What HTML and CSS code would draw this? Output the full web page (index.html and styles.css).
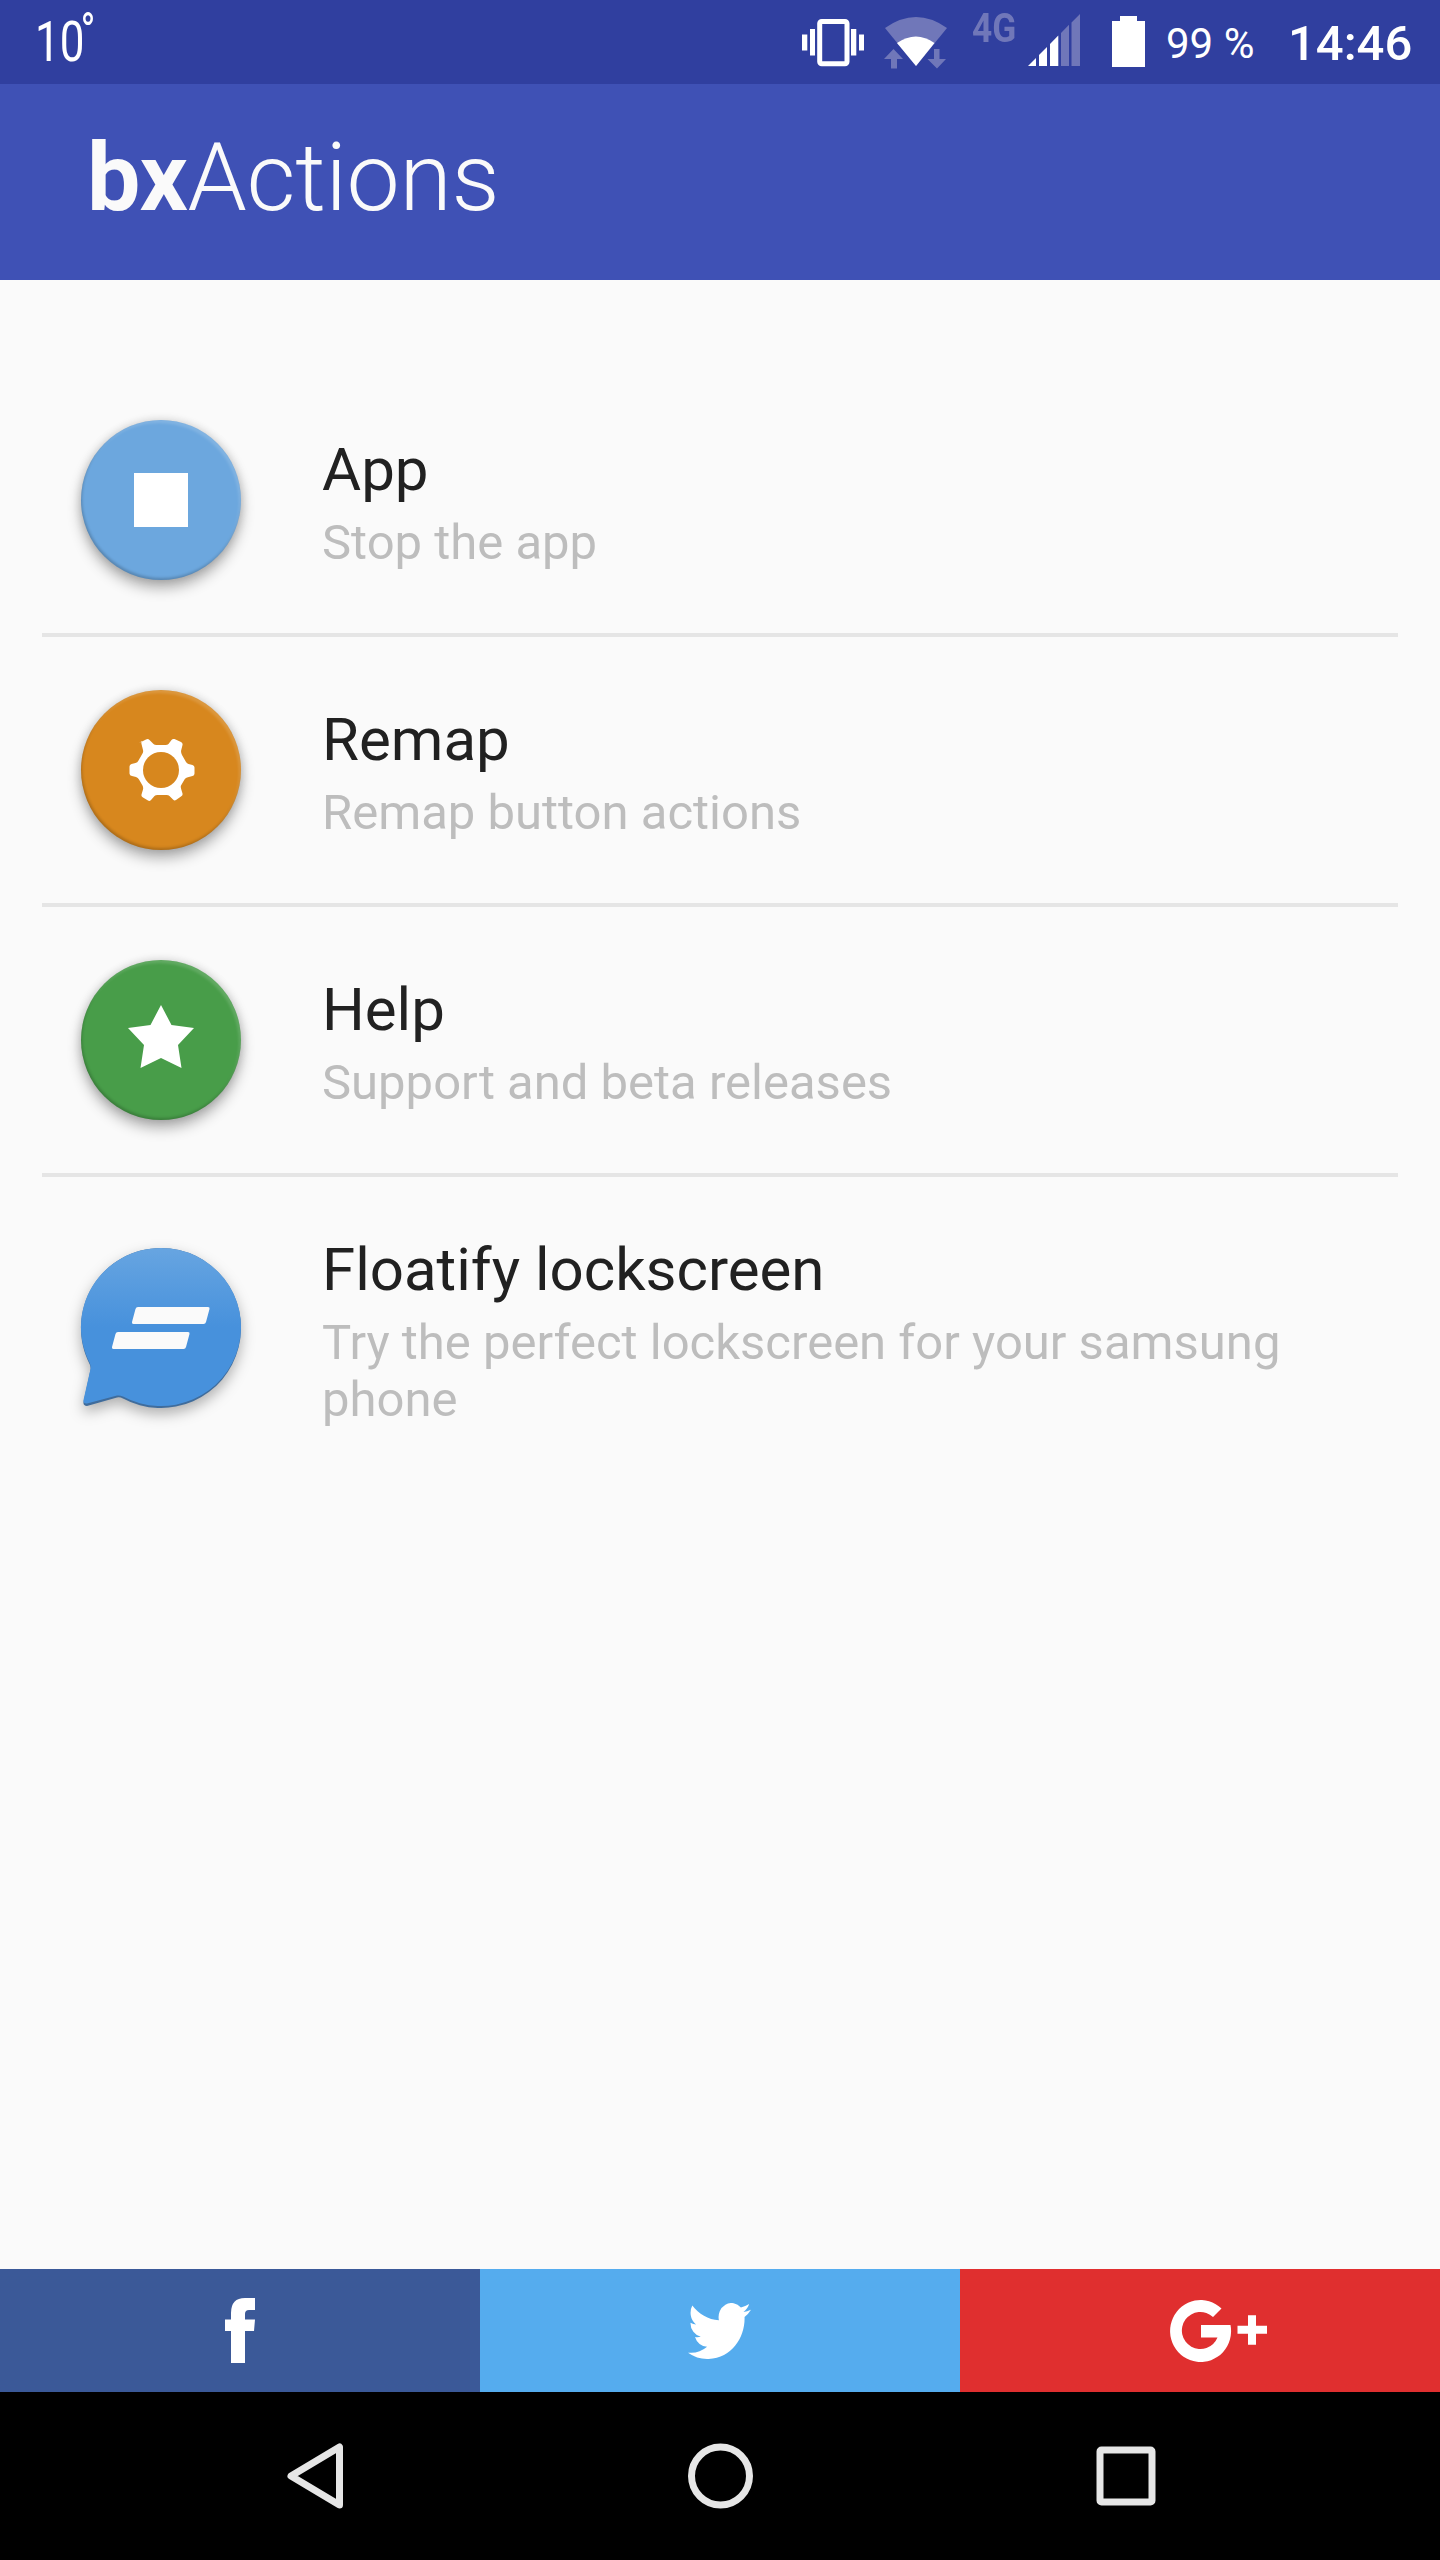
FILE: index.html
```html
<!DOCTYPE html>
<html lang="en">
<head>
    <meta charset="UTF-8">
    <meta name="viewport" content="width=device-width, initial-scale=1.0">
    <title>bxActions</title>
    <link rel="stylesheet" href="styles.css">
</head>
<body>
    <div class="status-bar">
        <div class="temperature"><span class="degrees">10<span class="degree-sign">°</span></span></div>
        <div class="status-icons">
            <svg class="vibrate" width="64" height="84" viewBox="0 0 64 84" fill="#fff">
                <path d="M1 34.5h5.3v16H1zM9 29h5v26.5H9zM50 29h5.3v26.5H50zM58 34.5h5v16h-5z"/>
                <rect x="18.7" y="21.5" width="27.3" height="42.3" rx="2" fill="none" stroke="#fff" stroke-width="5"/>
            </svg>
            <svg class="wifi" width="64" height="84" viewBox="0 0 64 84">
                <path d="M1 28Q32 6 63 28L32 66z" fill="#7077b9"/>
                <path d="M13 43Q32 30 50.5 43L32 66z" fill="#fff"/>
                <path d="M9.5 49l9.5 10h-6v9.5H7V59H0zM50 49h5.5v10H62L53 68.5 43.5 59H50z" fill="#7077b9"/>
            </svg>
            <span class="network">4G</span>
            <svg class="signal" width="53" height="84" viewBox="0 0 53 84">
                <path d="M0 66l8-8v8zM11 55l8-8v19h-8zM22 44l8.3-8.5V66H22z" fill="#fff"/>
                <path d="M33 33l8-8.3V66h-8zM43.5 22.5L52 14v52h-8.5z" fill="#7077b9"/>
            </svg>
            <svg class="battery" width="33" height="84" viewBox="0 0 33 84">
                <path d="M8 16h17v5h8v46H0V21h8z" fill="#fff"/>
            </svg>
            <span class="percent">99 %</span>
            <span class="clock">14:46</span>
        </div>
    </div>

    <header class="toolbar">
        <h1><b>bx</b>Actions</h1>
    </header>

    <main class="menu">
        <div class="menu-item">
            <div class="icon icon-app">
                <svg width="160" height="160" viewBox="0 0 160 160"><path d="M53 53h54v54H53z" fill="#fff"/></svg>
            </div>
            <div class="text">
                <h2>App</h2>
                <p>Stop the app</p>
            </div>
        </div>
        <div class="menu-item">
            <div class="icon icon-remap">
                <svg width="160" height="160" viewBox="0 0 160 160">
                    <path d="M58 53l7-3.5q2-1 3.5.5l4 4q1 1 3 1h9q2 0 3-1l3-4q1-1.5 3-1l6.5 3q2 1 1.5 3l-1.5 6q0 2 1 4l4 7q1 1.5 2.5 2l4 1q2 .5 2 2.5v6q0 2-2 2.5l-5.5 1.5q-1.5.5-2.5 2l-3.5 6q-.5 1 0 3l1.5 5q.5 2-1.5 3l-5 3.5q-1.5 1-3-.5l-3.5-3.5q-1-1-3-1h-9q-2 0-3 1l-3.5 4q-1.5 1.5-3 .5l-5-3q-2-1-1.500-3l1.500-5q.5-2-.5-4l-3.500-6q-1-2-3-2.500l-4-1q-2.500-.5-2.500-2.500v-7q0-2 2-2.500l4-1q2-.5 3-2.500l4-7q1-1.500.5-3.500l-1.500-6q-.5-2 .5-3z" fill="#fff"/>
                    <circle cx="80" cy="80" r="18" fill="#d7871e"/>
                </svg>
            </div>
            <div class="text">
                <h2>Remap</h2>
                <p>Remap button actions</p>
            </div>
        </div>
        <div class="menu-item">
            <div class="icon icon-help">
                <svg width="160" height="160" viewBox="0 0 160 160">
                    <path d="M80 45l10.5 20L113 68 97 85l3.5 23L80 98l-20.5 10L63 85 47 68l22.5-3z" fill="#fff"/>
                </svg>
            </div>
            <div class="text">
                <h2>Help</h2>
                <p>Support and beta releases</p>
            </div>
        </div>
        <div class="menu-item menu-item-tall">
            <div class="icon icon-floatify">
                <svg width="160" height="160" viewBox="0 0 160 160">
                    <defs>
                        <linearGradient id="bubble" x1="0" y1="0" x2="0" y2="1">
                            <stop offset="0" stop-color="#67a5e1"/>
                            <stop offset=".5" stop-color="#4791dc"/>
                        </linearGradient>
                    </defs>
                    <path d="M80 0A80 80 0 1 1 42 150.4Q39 149 36 149.5L6 158Q2 158 2.5 154L9.5 122Q10 120 9 117A80 80 0 0 1 80 0z" fill="#3f6c9c"/>
                    <path d="M80 0A80 79 0 1 1 42 148.5Q39 147 36 147.5L6 155.5Q2 156 2.5 152L9.5 121Q10 119 9 115.5A80 79 0 0 1 80 0z" fill="url(#bubble)"/>
                    <path d="M57 59h70q2 0 1.5 2l-3.5 13q-.5 2-2.5 2h-70q-2 0-1.5-2l3.5-13q.5-2 2.5-2zM37 84h70q2 0 1.5 2L105 99q-.5 2-2.5 2h-70q-2 0-1.5-2L34.5 86q.5-2 2.5-2z" fill="#fafafa"/>
                </svg>
            </div>
            <div class="text">
                <h2>Floatify lockscreen</h2>
                <p>Try the perfect lockscreen for your samsung phone</p>
            </div>
        </div>
    </main>

    <div class="social">
        <a class="facebook">
            <svg width="30" height="65" viewBox="0 0 30 65"><path d="M30 0v12h-6q-4 0-4 4v5.5h10L29 33h-9v32H6V33H0V21.5h6V15Q6 0 20 0z" fill="#fff"/></svg>
        </a>
        <a class="twitter">
            <svg width="63" height="56" viewBox="0 2.25 24 19.5" preserveAspectRatio="none">
                <path d="M23.953 4.57a10 10 0 01-2.825.775 4.958 4.958 0 002.163-2.723c-.951.555-2.005.959-3.127 1.184a4.92 4.92 0 00-8.384 4.482C7.69 8.095 4.067 6.13 1.64 3.162a4.822 4.822 0 00-.666 2.475c0 1.71.87 3.213 2.188 4.096a4.904 4.904 0 01-2.228-.616v.06a4.923 4.923 0 003.946 4.827 4.996 4.996 0 01-2.212.085 4.936 4.936 0 004.604 3.417 9.867 9.867 0 01-6.102 2.105c-.39 0-.779-.023-1.17-.067a13.995 13.995 0 007.557 2.209c9.053 0 13.998-7.496 13.998-13.985 0-.21 0-.42-.015-.63A9.935 9.935 0 0024 4.59z" fill="#fff"/>
            </svg>
        </a>
        <a class="google">
            <svg width="98" height="62" viewBox="0 0 98 62">
                <path d="M51.5 8.5L43 17A18.5 18.5 0 1 0 47.5 37.5H31V25h29.5A30.5 31 0 1 1 51.5 8.5z" fill="#fff"/>
                <path d="M78 15.3h8v10.4h11v8H86v11h-8v-11H67.5v-8H78z" fill="#fff"/>
            </svg>
        </a>
    </div>

    <nav class="nav-bar">
        <svg width="60" height="70" viewBox="0 0 60 70"><path d="M53.5 6v58L5 35z" fill="none" stroke="#e6e6e6" stroke-width="7" stroke-linejoin="round"/></svg>
        <svg width="66" height="66" viewBox="0 0 66 66"><circle cx="32.5" cy="33" r="29" fill="none" stroke="#e6e6e6" stroke-width="7"/></svg>
        <svg width="60" height="60" viewBox="0 0 60 60"><rect x="4" y="4" width="52" height="52" rx="1.5" fill="none" stroke="#e6e6e6" stroke-width="7"/></svg>
    </nav>
</body>
</html>
```
FILE: styles.css
```css
* {
    box-sizing: border-box;
}
body {
    margin: 0;
    width: 1440px;
    height: 2560px;
    display: flex;
    flex-direction: column;
    background-color: #fafafa;
    font-family: Roboto, sans-serif;
}
svg {
    display: block;
}
h1, h2, p {
    margin: 0;
    font-weight: 400;
}

/* status bar */
.status-bar {
    height: 84px;
    display: flex;
    justify-content: space-between;
    background-color: #303f9f;
    color: #fff;
    white-space: nowrap;
}
.temperature {
    display: flex;
    padding-left: 35px;
}
.degrees {
    display: flex;
    font-size: 55px;
    line-height: 85px;
    transform: scaleX(0.8);
    transform-origin: left;
}
.degree-sign {
    margin-left: -5px;
    font-size: 50px;
    line-height: 65px;
}
.status-icons {
    display: flex;
}
.wifi {
    margin-left: 19px;
}
.network {
    width: 46px;
    margin-left: 24px;
    font-size: 41px;
    font-weight: 700;
    line-height: 56px;
    color: #7077b9;
    transform: scaleX(0.86);
    transform-origin: left;
}
.signal {
    margin-left: 10px;
}
.battery {
    margin-left: 31px;
}
.percent {
    width: 90px;
    margin-left: 21px;
    font-size: 42px;
    line-height: 87px;
}
.clock {
    width: 152px;
    margin-left: 32px;
    font-size: 49px;
    font-weight: 500;
    line-height: 88px;
}

/* toolbar */
.toolbar {
    height: 196px;
    padding: 0 87px;
    background-color: #3f51b5;
    color: #fafafa;
}
.toolbar h1 {
    font-size: 95px;
    font-weight: 300;
    line-height: 187px;
    letter-spacing: -0.3px;
}
.toolbar b {
    font-weight: 700;
}

/* menu */
.menu {
    flex: 1;
    padding: 87px 42px 0;
}
.menu-item {
    height: 270px;
    display: flex;
    align-items: center;
    border-bottom: 4px solid #e5e5e5;
    padding: 0 39px;
}
.menu-item-tall {
    height: 302px;
    border-bottom: none;
}
.icon {
    width: 160px;
    height: 160px;
    margin-right: 81px;
    border-radius: 50%;
    box-shadow: 0 8px 14px rgba(0, 0, 0, 0.3), 0 0 10px rgba(0, 0, 0, 0.14), inset 1px -2px 3px rgba(0, 0, 0, 0.2), inset -2px 3px 3px rgba(255, 255, 255, 0.15);
}
.icon-app {
    background-color: #6ca7de;
}
.icon-remap {
    background-color: #d7871e;
}
.icon-help {
    background-color: #489d49;
}
.icon-floatify {
    border-radius: 0;
    box-shadow: none;
    filter: drop-shadow(0 6px 7px rgba(0, 0, 0, 0.3));
}
.icon-floatify svg {
    overflow: visible;
}
.text {
    flex: 1;
    padding-top: 4px;
}
.menu-item-tall .text {
    padding-top: 6px;
}
.text h2 {
    margin-bottom: 9px;
    font-size: 60px;
    line-height: 71px;
    color: #212121;
}
.text p {
    font-size: 49px;
    line-height: 57px;
    color: #bdbdbd;
}

/* social buttons */
.social {
    height: 123px;
    display: flex;
}
.social a {
    width: 480px;
    display: flex;
    align-items: center;
    justify-content: center;
}
.facebook {
    background-color: #3b5998;
}
.twitter {
    padding-right: 1px;
    background-color: #55acee;
}
.google {
    padding-left: 37px;
    background-color: #e02f2f;
}

/* navigation bar */
.nav-bar {
    height: 168px;
    display: flex;
    align-items: center;
    justify-content: space-between;
    padding: 0 284px 0 286px;
    background-color: #000;
}
```
